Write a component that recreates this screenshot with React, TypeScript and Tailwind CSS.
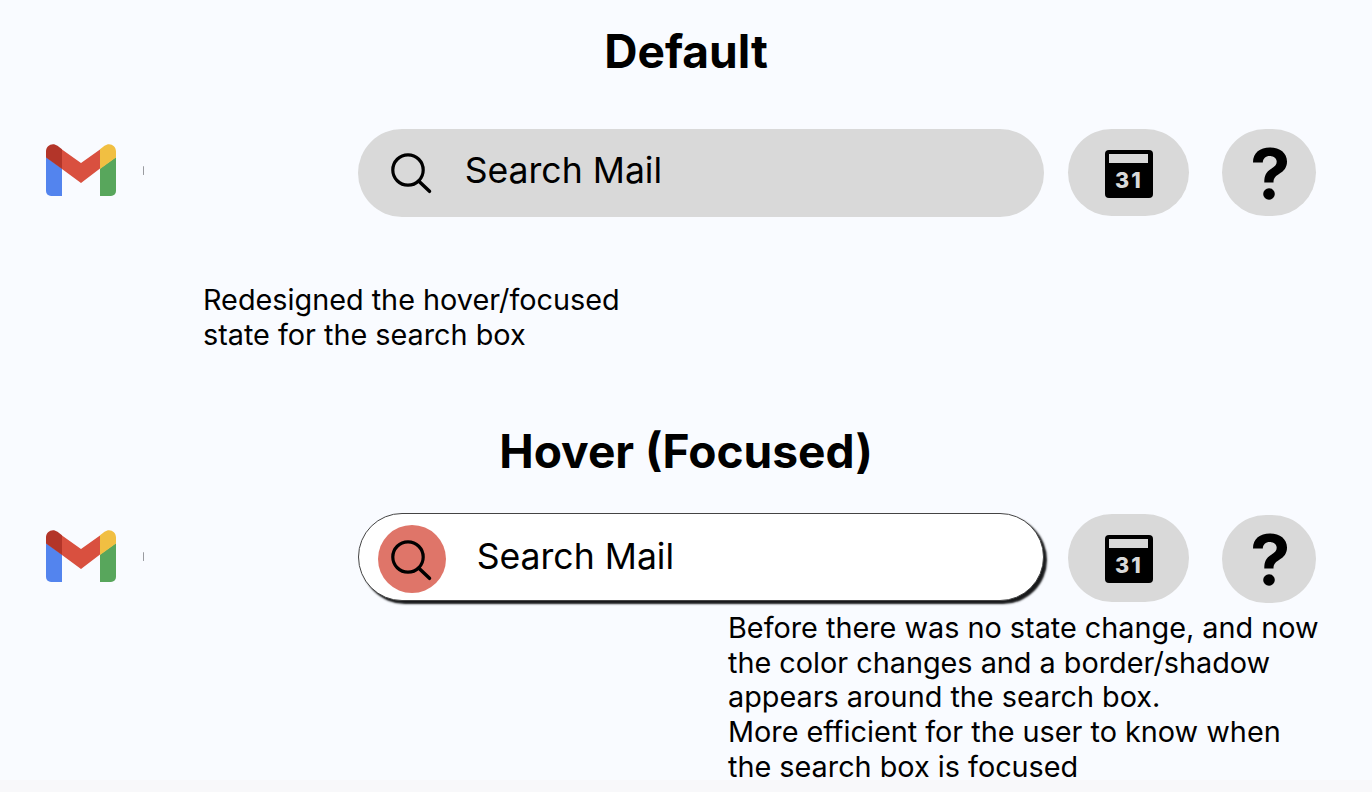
import type { ReactNode } from "react";

function GmailLogo() {
  return (
    <svg className="h-[52px] w-[70px] shrink-0" viewBox="0 0 70 52" aria-label="Gmail">
      <path fill="#5384ee" d="M0 13 16 24.500V52H5a5 5 0 0 1-5-5Z" />
      <path fill="#58a65c" d="M70 13 54 24.500V52h11a5 5 0 0 0 5-5Z" />
      <path fill="#d9503f" d="M16 5.500 35 19 54 5.500V24.500L35 39 16 25Z" />
      <path fill="#b33529" d="M0 13.500V7.500C0 1.500 6.500-2 11.500 1.800L16 5.200V25Z" />
      <path fill="#f1bf42" d="M70 13.500V7.500C70 1.500 63.500-2 58.500 1.800L54 5.200V25Z" />
    </svg>
  );
}

function SearchIcon() {
  return (
    <svg className="h-[42px] w-[42px] shrink-0" viewBox="0 0 42 42" fill="none" stroke="#000" strokeWidth="3.200">
      <circle cx="18" cy="18" r="15.200" />
      <path d="M28.900 29.200 39.500 39.300" strokeWidth="3.500" strokeLinecap="round" />
    </svg>
  );
}

function CalendarIcon() {
  return (
    <div className="flex h-12 w-12 flex-col items-center rounded-[4px] bg-black pt-1">
      <div className="h-[9px] w-[39px] bg-[#d9d9d9]" />
      <span className="mt-[6px] text-[21.600px] leading-[22px] font-extrabold tracking-[2px] text-[#d9d9d9]">31</span>
    </div>
  );
}

function HelpIcon() {
  return (
    <svg className="h-[53px] w-[36px]" viewBox="0 0 36 53">
      <path
        d="M1 15.500C1 5.800 8 .5 17.800.5 28 .5 35 6 35 14.500c0 6-3 9.500-8 12.500-4 2.500-5.500 4.500-5.500 8.500H12.300c0-7 1.700-10.500 7-13.700 3.600-2.300 5.400-4 5.400-7 0-3.500-2.900-5.800-7-5.800-4 0-6.700 2.500-6.900 6.500Z"
      />
      <circle cx="17" cy="47" r="5.800" />
    </svg>
  );
}

function Toolbar({ children, focused }: { children: ReactNode; focused?: boolean }) {
  return (
    <div className="flex h-[88px] items-start pl-[45.700px]">
      <div className={`flex items-center ${focused ? "mt-[17px]" : "mt-[16px]"}`}>
        <GmailLogo />
        <div className="ml-[27px] h-[9px] w-px rounded-full bg-[#9a9ba0]" />
      </div>
      <div className="ml-[214.700px]">{children}</div>
      <div className={`ml-6 flex h-[87.500px] w-[121px] justify-center rounded-[44px] bg-[#d9d9d9] pt-[21px] ${focused ? "mt-[1px]" : "mt-[.5px]"}`}>
        <CalendarIcon />
      </div>
      <div className={`ml-[33px] flex h-[87.500px] w-[94px] justify-center rounded-[44px] bg-[#d9d9d9] pt-[18px] pl-[.5px] ${focused ? "mt-[2px]" : "mt-[.5px]"}`}>
        <HelpIcon />
      </div>
    </div>
  );
}

export default function App() {
  return (
    <main className="flex h-[792px] w-[1372px] flex-col overflow-hidden bg-[linear-gradient(#f9fbff_780px,#f8f8fa_780px)] font-['Inter',sans-serif] text-black">
      <h2 className="mt-[23px] h-[56px] text-center text-[46.100px] leading-[56px] font-bold">Default</h2>
      <div className="mt-[49px]">
        <Toolbar>
          <div className="mt-[.5px] flex h-[88px] w-[686px] items-start rounded-[44px] bg-[#d9d9d9] pl-[32px]">
            <div className="mt-[23.500px]"><SearchIcon /></div>
            <span className="mt-[20px] ml-[32.300px] text-[35.600px] leading-[44px]">Search Mail</span>
          </div>
        </Toolbar>
      </div>
      <p className="mt-[67px] ml-[203px] h-[70px] text-[28.800px] leading-[34.700px] whitespace-nowrap">
        Redesigned the hover/focused<br />state for the search box
      </p>
      <h2 className="mt-[70px] h-[56px] text-center text-[46.100px] leading-[56px] font-bold">Hover (Focused)</h2>
      <div className="mt-[34px]">
        <Toolbar focused>
          <div className="flex h-[88px] w-[686px] items-start rounded-[44px] border border-[#444] bg-white pl-[19px] shadow-[3px_3px_2px_#18191b]">
            <div className="mt-[11px] flex h-[68px] w-[68px] items-start rounded-full bg-[#df7569] pt-[14px] pl-[12px]">
              <SearchIcon />
            </div>
            <span className="mt-[21px] ml-[30.300px] text-[35.600px] leading-[44px]">Search Mail</span>
          </div>
        </Toolbar>
      </div>
      <p className="mt-[10px] ml-[728px] h-[169px] text-[28.800px] leading-[34.700px] whitespace-nowrap">
        Before there was no state change, and now<br />
        the color changes and a border/shadow<br />
        appears around the search box.<br />
        More efficient for the user to know when<br />
        the search box is focused
      </p>
    </main>
  );
}
